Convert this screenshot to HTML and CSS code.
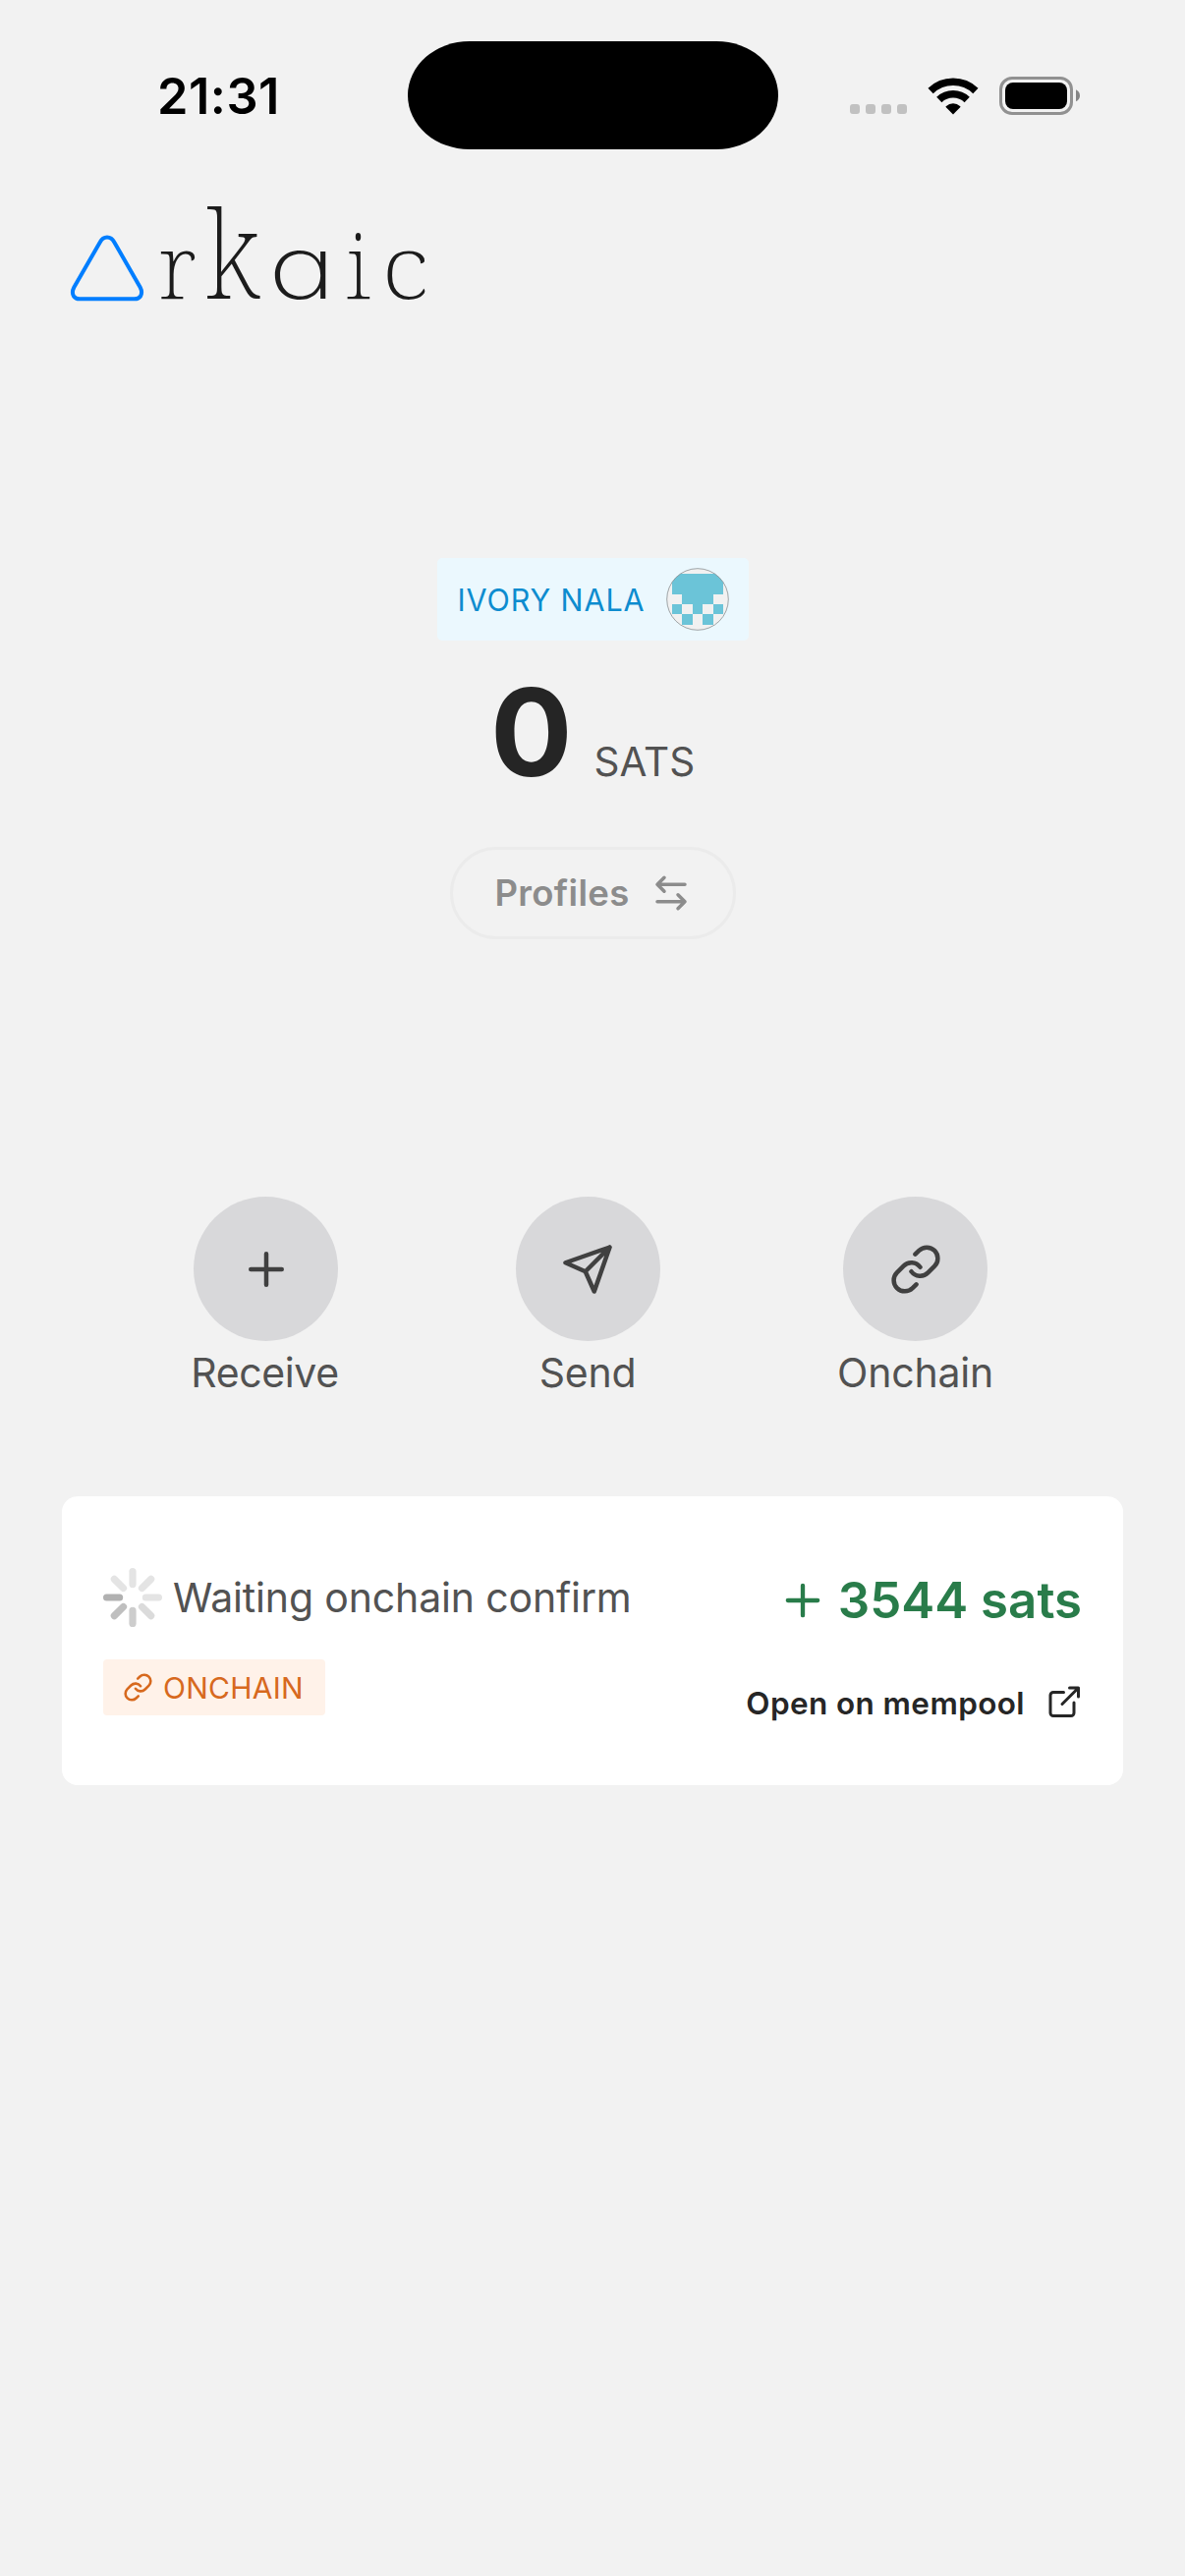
FILE: index.html
```
<!DOCTYPE html>
<html lang="en">
<head>
<meta charset="utf-8">
<title>Arkaic</title>
<link rel="stylesheet" href="styles.css">
</head>
<body>
<div class="statusbar">
  <div class="time">21:31</div>
  <div class="island"></div>
  <div class="indicators">
    <div class="signal"><i></i><i></i><i></i><i></i></div>
    <svg class="wifi" width="52" height="38" viewBox="0 0 52 38" fill="none" stroke="#000">
      <path d="M3.1 13.4A33.2 33.2 0 0 1 48.9 13.4" stroke-width="7.6"/>
      <path d="M11.8 22.4A20.6 20.6 0 0 1 40.2 22.4" stroke-width="7.6"/>
      <path d="M26 37.6L18.6 30Q18.3 29.6 18.7 29.2Q22 26.3 26 26.3Q30 26.3 33.3 29.2Q33.7 29.6 33.4 30Z" fill="#000" stroke="none"/>
    </svg>
    <svg class="battery" width="82" height="39" viewBox="0 0 82 39">
      <rect x="1.5" y="1.5" width="72" height="36" rx="11.5" fill="none" stroke="#919191" stroke-width="3"/>
      <rect x="6" y="6" width="63" height="27" rx="8" fill="#000"/>
      <path d="M78 13.3Q82 15.3 82 19.3Q82 23.3 78 25.3Z" fill="#858585"/>
    </svg>
  </div>
</div>

<header class="logo">
  <svg class="mark" width="78" height="70" viewBox="0 0 78 70" fill="none" stroke="#007eff" stroke-width="4">
    <path d="M31.8 8.5Q34.3 3.5 39 3.5Q43.700 3.500 46.300 8.500L72.700 54.500Q75.300 59.500 73 63.500Q71 66.300 67 66.300H11Q7 66.300 5 63.500Q2.700 59.500 5.300 54.500Z"/>
  </svg>
  <span class="wordmark"><span class="l r">r</span><span class="l k">k</span><span class="l a">a</span><span class="l i">i</span><span class="l c">c</span></span>
</header>

<section class="balance">
  <div class="account">
    <span class="account-name">IVORY NALA</span>
    <svg class="avatar" width="64" height="64" viewBox="0 0 64 64">
      <circle cx="32" cy="32" r="31.300" fill="#f1f1f1"/>
      <clipPath id="disc"><circle cx="32" cy="32" r="31.300"/></clipPath>
      <g clip-path="url(#disc)" fill="#6bc4d8" shape-rendering="crispEdges">
        <rect x="6" y="6" width="52" height="21"/>
        <rect x="16" y="27" width="32" height="10"/>
        <rect x="6" y="37" width="10" height="10"/><rect x="27" y="37" width="10" height="10"/><rect x="48" y="37" width="10" height="10"/>
        <rect x="16" y="47" width="11" height="11"/><rect x="37" y="47" width="11" height="11"/>
      </g>
      <circle cx="32" cy="32" r="31.300" fill="none" stroke="#8a8f92" stroke-width=".8"/>
    </svg>
  </div>
  <div class="amount"><span class="value">0</span><span class="unit">SATS</span></div>
  <button class="profiles">Profiles
    <svg width="42" height="42" viewBox="0 0 24 24"><path d="M8 3 4 7l4 4M4 7h16M16 21l4-4-4-4M20 17H4"/></svg>
  </button>
</section>

<nav class="actions">
  <div class="action"><div class="round"><svg width="54" height="54" viewBox="0 0 24 24"><path d="M5 12h14M12 5v14"/></svg></div><span class="receive">Receive</span></div>
  <div class="action"><div class="round"><svg width="54" height="54" viewBox="0 0 24 24"><path d="m22 2-7 20-4-9-9-4ZM22 2 11 13"/></svg></div><span>Send</span></div>
  <div class="action"><div class="round"><svg width="54" height="54" viewBox="0 0 24 24"><path d="M10 13a5 5 0 0 0 7.540.540l3-3a5 5 0 0 0-7.070-7.070l-1.720 1.710M14 11a5 5 0 0 0-7.540-.540l-3 3a5 5 0 0 0 7.070 7.070l1.710-1.710"/></svg></div><span>Onchain</span></div>
</nav>

<article class="card">
  <div class="info">
    <div class="status">
      <svg width="60" height="60" viewBox="-30 -30 60 60" stroke-width="7.200" stroke-linecap="round">
        <g stroke="#e4e4e4"><path d="M0-13.400V-26.400"/><path d="M0-13.400V-26.400" transform="rotate(45)"/><path d="M0-13.400V-26.400" transform="rotate(90)"/><path d="M0-13.400V-26.400" transform="rotate(-45)"/></g>
        <path stroke="#dbdbdb" d="M0-13.400V-26.400" transform="rotate(135)"/>
        <path stroke="#cdcdcd" d="M0-13.400V-26.400" transform="rotate(180)"/>
        <path stroke="#bfbfbf" d="M0-13.400V-26.400" transform="rotate(225)"/>
        <path stroke="#b1b1b1" d="M0-13.400V-26.400" transform="rotate(270)"/>
      </svg>
      <span>Waiting onchain confirm</span>
    </div>
    <div class="tag"><svg width="31" height="31" viewBox="0 0 24 24"><path d="M10 13a5 5 0 0 0 7.540.540l3-3a5 5 0 0 0-7.070-7.070l-1.720 1.710M14 11a5 5 0 0 0-7.540-.540l-3 3a5 5 0 0 0 7.070 7.070l1.710-1.710"/></svg>ONCHAIN</div>
  </div>
  <div class="details">
    <div class="sum"><svg width="52" height="52" viewBox="0 0 24 24"><path d="M5 12h14M12 5v14"/></svg>3544 sats</div>
    <a class="mempool">Open on mempool<svg width="36" height="36" viewBox="0 0 24 24"><path d="M13 5H6a2 2 0 0 0-2 2v12a2 2 0 0 0 2 2h12a2 2 0 0 0 2-2v-7M17 2h6v6M12 13 23 2"/></svg></a>
  </div>
</article>
</body>
</html>
```
FILE: styles.css
```
* { box-sizing: border-box; }
body {
  margin: 0;
  width: 1206px;
  min-height: 2622px;
  background: #f2f2f2;
  font-family: Inter, "Liberation Sans", sans-serif;
  color: #525252;
  white-space: nowrap;
}
svg { display: block; flex: none; overflow: visible; }

.statusbar {
  display: grid;
  grid-template-columns: 414.5px 377px 1fr;
  height: 180px;
  padding-top: 41.5px;
}
.time {
  padding-left: 160px;
  height: 113px;
  line-height: 112px;
  font-size: 50.5px;
  font-weight: 600;
  letter-spacing: .5px;
  color: #000;
}
.island { height: 110.5px; border-radius: 63px / 55.25px; background: #000; }
.indicators { display: flex; align-items: flex-start; padding: 36px 0 0 73.5px; }
.signal { display: flex; gap: 6px; margin-top: 28.5px; }
.signal i { width: 10px; height: 10px; border-radius: 3px; background: #c1c1c1; }
.wifi { margin: 1px 0 0 21px; }
.battery { margin-left: 21px; margin-top: .5px; }

.logo { display: flex; height: 140px; padding: 58px 0 0 70px; }
.wordmark {
  display: flex;
  align-items: baseline;
  height: 70px;
  margin: -4px 0 0 12px;
  line-height: 70px;
  font-family: "Noto Serif", "Liberation Serif", serif;
  font-size: 90px;
  font-weight: 250;
  color: #1c1c1c;
}
.l { display: block; transform-origin: 0 69.9px; }
.r { width: 49px; transform: scaleX(1.05); }
.k { width: 68px; transform: scale(1.15, 1.36); font-weight: 200; }
.a {
  width: 74px;
  font-family: Inter, sans-serif;
  font-size: 88px;
  font-weight: 200;
  font-feature-settings: "cv11";
  transform: translateX(-4px) scaleX(1.32);
}
.i { width: 37px; }
.c { transform: scaleX(1.17); }

.balance { display: flex; flex-direction: column; align-items: center; padding-top: 248px; }
.account {
  display: flex;
  align-items: center;
  justify-content: space-between;
  width: 317px;
  height: 84px;
  padding: 0 20px 0 21px;
  border-radius: 5px;
  background: #ebf8fe;
}
.account-name { padding-top: 1px; font-size: 30.5px; letter-spacing: .9px; color: #0d8ccf; }
.amount {
  display: flex;
  align-items: baseline;
  height: 114px;
  margin-top: 36px;
  line-height: 114px;
}
.value { font-size: 124px; font-weight: 700; color: #252525; }
.unit { margin-left: 22px; font-size: 40.5px; }
.profiles {
  display: flex;
  align-items: center;
  gap: 21px;
  width: 291px;
  height: 94px;
  margin-top: 60px;
  padding: 0 0 0 43px;
  border: 3px solid #ebebeb;
  border-radius: 47px;
  background: none;
  font: 600 36.5px Inter, sans-serif;
  letter-spacing: .3px;
  color: #8c8c8c;
}
.profiles svg, .actions svg, .tag svg, .sum svg, .mempool svg {
  fill: none;
  stroke: currentColor;
  stroke-width: 2;
  stroke-linecap: round;
  stroke-linejoin: round;
}

.actions { display: flex; justify-content: space-between; margin: 262px 200px 0 196px; }
.action { display: flex; flex-direction: column; align-items: center; width: 149px; font-size: 41px; line-height: 50px; letter-spacing: -.2px; }
.receive { letter-spacing: -.4px; margin-left: -2px; }
.round {
  display: grid;
  place-items: center;
  width: 147px;
  height: 147px;
  margin-bottom: 7px;
  border-radius: 50%;
  background: #d8d8da;
  color: #404040;
}
.action:nth-child(2) { margin-right: 6px; }

.card {
  display: flex;
  justify-content: space-between;
  width: 1080px;
  height: 294px;
  margin: 101px auto 0;
  padding: 73px 42px 0;
  border-radius: 16px;
  background: #fff;
}
.status { display: flex; align-items: center; gap: 11px; height: 60px; font-size: 41px; letter-spacing: -.15px; }
.tag {
  display: flex;
  align-items: center;
  gap: 10px;
  width: 226px;
  height: 57px;
  margin-top: 33px;
  padding-left: 20px;
  border-radius: 4px;
  background: #fff2e9;
  font-size: 30px;
  letter-spacing: .25px;
  color: #d7691e;
}
.details { display: flex; flex-direction: column; align-items: flex-end; }
.sum { display: flex; align-items: center; gap: 10px; height: 65px; font-size: 51px; font-weight: 600; color: #297c4a; }
.mempool { display: flex; align-items: center; gap: 20px; height: 40px; margin-top: 52px; padding-right: 2px; font-size: 31.5px; font-weight: 600; letter-spacing: .4px; color: #262626; }
```
